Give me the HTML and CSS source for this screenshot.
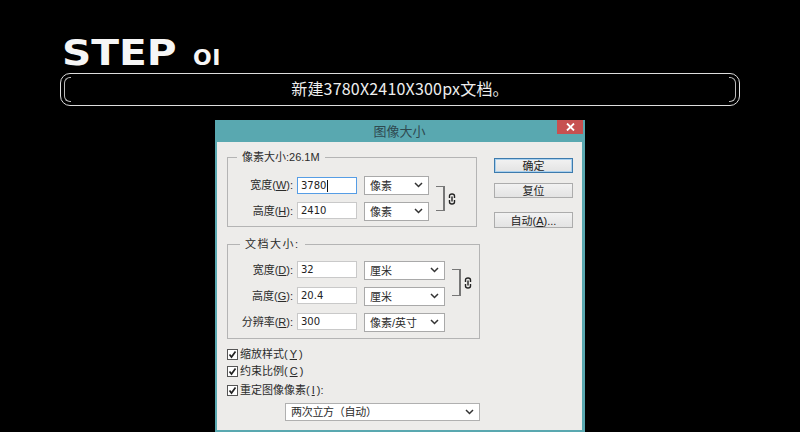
FILE: index.html
```html
<!DOCTYPE html>
<html lang="zh-CN">
<head>
<meta charset="utf-8">
<title>STEP 01</title>
<link rel="stylesheet" href="styles.css">
</head>
<body>
<header class="head">
  <h1 class="title"><span class="step">STEP</span><span class="num">OI</span></h1>
  <p class="banner">新建3780X2410X300px文档。</p>
</header>
<section class="dialog">
  <div class="titlebar">
    <span class="title-text">图像大小</span>
    <span class="close"><svg width="9" height="8" viewBox="0 0 9 8"><path d="M1 0.5 8 7.5M8 0.5 1 7.5" stroke="#fff" stroke-width="1.8" fill="none"/></svg></span>
  </div>
  <div class="client">
    <div class="main">
      <div class="group group-px">
        <div class="legend">像素大小:26.1M</div>
        <div class="grid grid-px">
          <label class="lbl">宽度(<u>W</u>):</label>
          <div class="input input-focus nudge">3780<i class="caret"></i></div>
          <div class="select sel-px">像素<svg class="chev" width="9" height="6" viewBox="0 0 9 6"><path d="M1 1 4.500 4.500 8 1" stroke="#333" stroke-width="1.500" fill="none"/></svg></div>
          <div class="linkwrap link-px">
            <span class="bracket"></span>
            <svg class="link" width="8" height="12" viewBox="0 0 8 12"><path d="M1.500 5V3Q1.500 1 4 1T6.500 3V5M1.500 7V9Q1.500 11 4 11T6.500 9V7M4 3.500V8.500" fill="none" stroke="#222" stroke-width="1.400"/></svg>
          </div>
          <label class="lbl">高度(<u>H</u>):</label>
          <div class="input">2410</div>
          <div class="select sel-px">像素<svg class="chev" width="9" height="6" viewBox="0 0 9 6"><path d="M1 1 4.500 4.500 8 1" stroke="#333" stroke-width="1.500" fill="none"/></svg></div>
        </div>
      </div>
      <div class="group group-doc">
        <div class="legend legend-doc">文档大小:</div>
        <div class="grid grid-doc">
          <label class="lbl">宽度(<u>D</u>):</label>
          <div class="input">32</div>
          <div class="select sel-doc">厘米<svg class="chev" width="9" height="6" viewBox="0 0 9 6"><path d="M1 1 4.500 4.500 8 1" stroke="#333" stroke-width="1.500" fill="none"/></svg></div>
          <div class="linkwrap link-doc">
            <span class="bracket"></span>
            <svg class="link" width="8" height="12" viewBox="0 0 8 12"><path d="M1.500 5V3Q1.500 1 4 1T6.500 3V5M1.500 7V9Q1.500 11 4 11T6.500 9V7M4 3.500V8.500" fill="none" stroke="#222" stroke-width="1.400"/></svg>
          </div>
          <label class="lbl">高度(<u>G</u>):</label>
          <div class="input">20.4</div>
          <div class="select sel-doc">厘米<svg class="chev" width="9" height="6" viewBox="0 0 9 6"><path d="M1 1 4.500 4.500 8 1" stroke="#333" stroke-width="1.500" fill="none"/></svg></div>
          <label class="lbl">分辨率(<u>R</u>):</label>
          <div class="input">300</div>
          <div class="select sel-doc">像素/英寸<svg class="chev" width="9" height="6" viewBox="0 0 9 6"><path d="M1 1 4.500 4.500 8 1" stroke="#333" stroke-width="1.500" fill="none"/></svg></div>
        </div>
      </div>
      <div class="checks">
        <div class="check"><svg class="box" width="11" height="11" viewBox="0 0 11 11"><rect x="0.500" y="0.500" width="10" height="10" fill="#fff" stroke="#555"/><path d="M2.500 5.500 4.500 8 8.500 2.500" stroke="#222" stroke-width="1.700" fill="none"/></svg>缩放样式(<u>Y</u>)</div>
        <div class="check"><svg class="box" width="11" height="11" viewBox="0 0 11 11"><rect x="0.500" y="0.500" width="10" height="10" fill="#fff" stroke="#555"/><path d="M2.500 5.500 4.500 8 8.500 2.500" stroke="#222" stroke-width="1.700" fill="none"/></svg>约束比例(<u>C</u>)</div>
        <div class="check check-last"><svg class="box" width="11" height="11" viewBox="0 0 11 11"><rect x="0.500" y="0.500" width="10" height="10" fill="#fff" stroke="#555"/><path d="M2.500 5.500 4.500 8 8.500 2.500" stroke="#222" stroke-width="1.700" fill="none"/></svg>重定图像像素(<u>I</u>):</div>
      </div>
      <div class="select select-wide">两次立方（自动）<svg class="chev" width="9" height="6" viewBox="0 0 9 6"><path d="M1 1 4.500 4.500 8 1" stroke="#333" stroke-width="1.500" fill="none"/></svg></div>
    </div>
    <div class="buttons">
      <button class="btn btn-default" type="button">确定</button>
      <button class="btn btn-reset" type="button">复位</button>
      <button class="btn btn-auto" type="button">自动(<u>A</u>)...</button>
    </div>
  </div>
</section>
</body>
</html>
```

FILE: styles.css
```css
* { box-sizing: border-box; }
html, body { margin: 0; padding: 0; }
body {
  width: 800px;
  height: 432px;
  overflow: hidden;
  background: #000;
  font-family: "Noto Sans CJK SC", sans-serif;
}

.head { padding: 33px 60px 0; }
.title {
  margin: 0;
  height: 40px;
  display: flex;
  align-items: baseline;
  color: #f6f6f6;
  font-family: "DejaVu Sans", sans-serif;
  font-weight: 700;
  line-height: 39px;
}
.step {
  display: inline-block;
  width: 116px;
  margin-left: 2px;
  font-size: 36px;
  transform: scaleX(1.13);
  transform-origin: left center;
}
.num { font-size: 22px; margin-left: 15px; letter-spacing: 0.5px; }

.banner {
  position: relative;
  margin: 0;
  height: 33px;
  border: 1px solid #ddd;
  border-radius: 10px;
  color: #eee;
  font-size: 16px;
  letter-spacing: 0.2px;
  line-height: 29px;
  text-align: center;
}
.banner::before,
.banner::after {
  content: "";
  position: absolute;
  top: 3px;
  bottom: 3px;
  width: 6px;
  border: 1px solid #bbb;
}
.banner::before { left: 3px; border-right: 0; border-radius: 6px 0 0 6px; }
.banner::after { right: 3px; border-left: 0; border-radius: 0 6px 6px 0; }

.dialog {
  width: 370px;
  height: 312px;
  margin: 14px 0 0 215px;
  background: #59a8b0;
  padding: 0 3px 2px 2px;
  display: flex;
  flex-direction: column;
}
.titlebar {
  position: relative;
  height: 22px;
  flex: none;
  display: flex;
  justify-content: center;
  align-items: center;
}
.title-text { font-size: 13px; color: #2f4a50; line-height: 18px; }
.close {
  position: absolute;
  top: 0;
  right: -1px;
  width: 26px;
  height: 14px;
  background: #c75050;
  display: flex;
  align-items: center;
  justify-content: center;
}

.client {
  flex: 1;
  min-height: 0;
  background: #edecea;
  padding: 15px 0 0 10px;
  display: flex;
  color: #2b2b2b;
  font-family: "Liberation Sans", "Noto Sans CJK SC", sans-serif;
  font-size: 11px;
}
.main { width: 253px; flex: none; }

.group { border: 1px solid #b4b4b4; }
.group-px { width: 250px; height: 70px; }
.group-doc { width: 253px; height: 95px; margin-top: 17px; }

.legend {
  width: fit-content;
  height: 14px;
  margin: -8px 0 0 9px;
  padding: 0 5px;
  background: #edecea;
  line-height: 14px;
}
.legend-doc { margin-left: 12px; letter-spacing: 1.5px; }

.grid {
  display: grid;
  grid-auto-rows: 19px;
  row-gap: 7px;
  align-items: start;
}
.grid-px { margin-top: 12px; grid-template-columns: 69px 67px 72px auto; }
.grid-doc { margin-top: 10px; grid-template-columns: 69px 67px 88px auto; }

.lbl {
  display: block;
  padding-right: 4px;
  height: 19px;
  line-height: 19px;
  text-align: right;
  white-space: nowrap;
}
.input {
  width: 60px;
  height: 17px;
  background: #fff;
  border: 1px solid #c9c9c9;
  padding-left: 3px;
  font-family: "DejaVu Sans", sans-serif;
  font-size: 10px;
  line-height: 15px;
  color: #222;
  display: flex;
  align-items: center;
}
.nudge { margin-top: 1px; }
.input-focus { border-color: #569de5; }
.caret { width: 1px; height: 12px; background: #111; margin-left: 1px; }

.select {
  position: relative;
  height: 19px;
  background: #fff;
  border: 1px solid #a9a9a9;
  padding-left: 5px;
  line-height: 18px;
  color: #2b2b2b;
  white-space: nowrap;
}
.sel-px { width: 65px; }
.sel-doc { width: 81px; }
.chev { position: absolute; right: 5px; top: 5px; }

.linkwrap {
  grid-row: 1 / span 2;
  grid-column: 4;
  display: flex;
  align-items: center;
  gap: 3px;
}
.link-px { margin-top: 10px; height: 25px; }
.link-doc { margin-top: 8px; height: 27px; }
.bracket {
  width: 9px;
  align-self: stretch;
  border: 1px solid #777;
  border-left: 0;
  border-right-width: 2px;
}

.checks { margin-top: 10px; display: flex; flex-direction: column; gap: 1px; }
.check { display: flex; align-items: flex-start; height: 16px; gap: 2px; line-height: 11px; white-space: nowrap; }
.check .box { flex: none; }
.check-last { margin-top: 2px; }

.select-wide { width: 195px; height: 18px; margin: 2px 0 0 58px; border-color: #b0b0b0; line-height: 16px; letter-spacing: -0.3px; }

.buttons {
  margin-left: 14px;
  width: 79px;
  padding-top: 1px;
  display: flex;
  flex-direction: column;
}
.btn {
  width: 79px;
  padding: 1px 0 0;
  border: 1px solid #acacac;
  background: linear-gradient(#f2f2f2, #e3e3e3);
  color: #222;
  font-family: "Liberation Sans", "Noto Sans CJK SC", sans-serif;
  font-size: 11px;
  line-height: 12px;
}
.btn-default { height: 15px; border: 1px solid #3d7bad; box-shadow: inset 0 0 0 1px #a9d0ee; }
.btn-reset { height: 15px; margin-top: 10px; }
.btn-auto { height: 16px; margin-top: 14px; }
```
